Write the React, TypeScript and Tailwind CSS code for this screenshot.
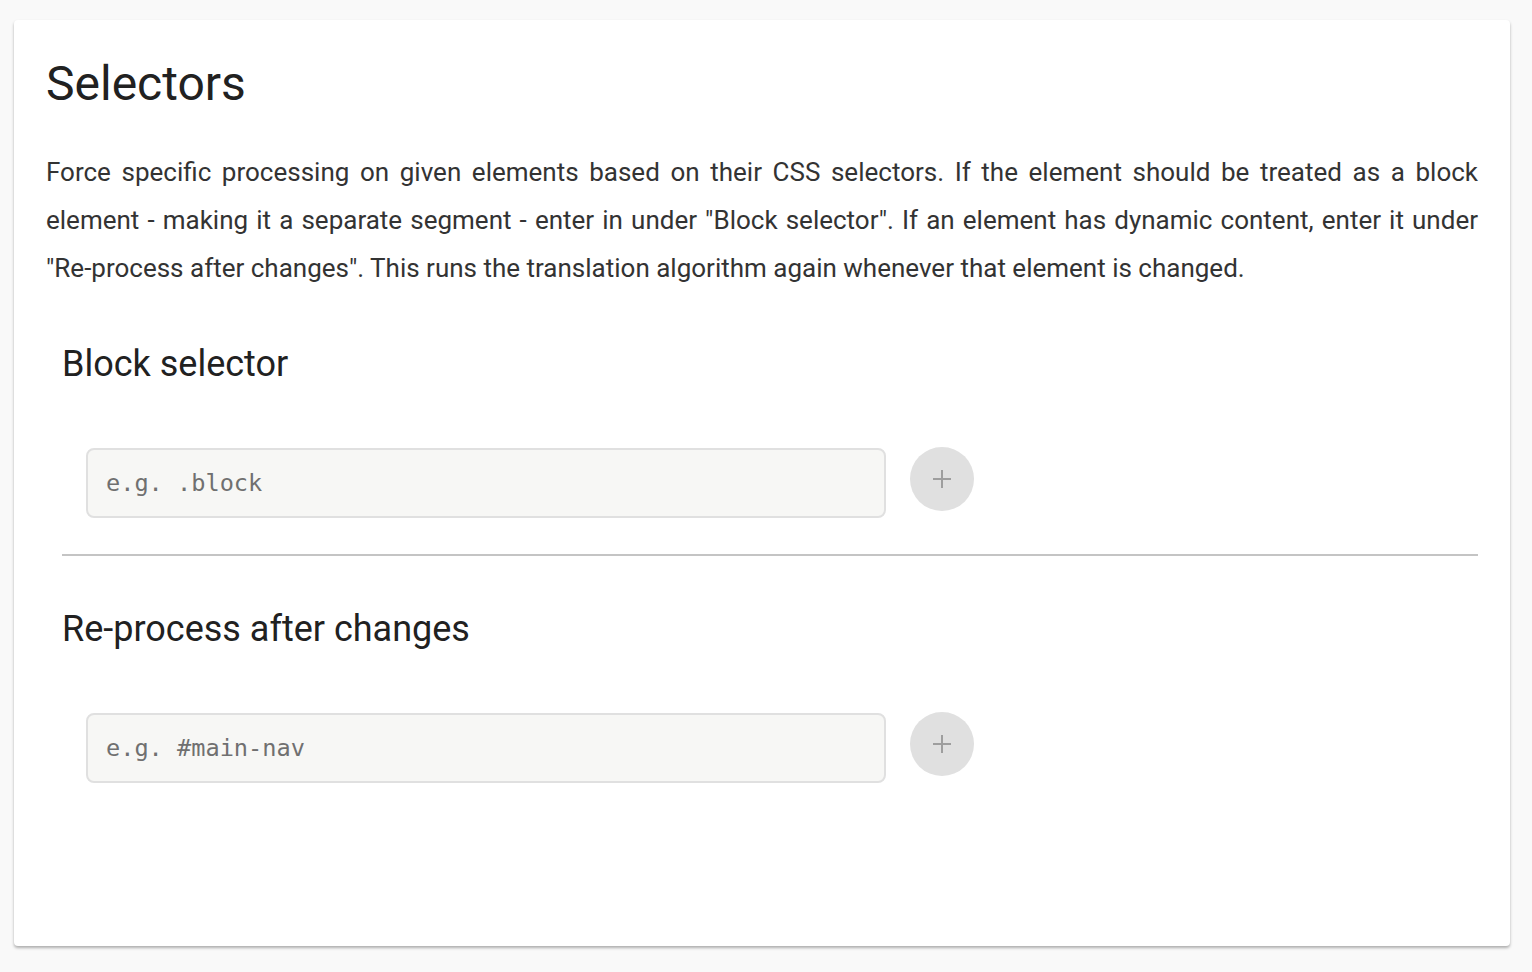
import React from "react";

function Plus() {
  return (
    <svg width="22" height="22" viewBox="0 0 22 22" fill="none">
      <path d="M11 2v18M2 11h18" stroke="#9e9e9e" strokeWidth="2" />
    </svg>
  );
}

function Row({ placeholder }: { placeholder: string }) {
  return (
    <div className="flex items-start gap-6 pl-6">
      <input
        placeholder={placeholder}
        className="w-[800px] h-[70px] rounded-lg border-2 border-[#e0e0e0] bg-[#f7f7f5] px-[18px] text-[23.6px] text-[#444] placeholder:text-[#707070] outline-none"
        style={{ fontFamily: '"DejaVu Sans Mono", monospace' }}
      />
      <button className="w-16 h-16 -mt-px rounded-full bg-[#e0e0e0] flex items-center justify-center">
        <Plus />
      </button>
    </div>
  );
}

export default function App() {
  return (
    <div
      className="min-h-[972px] bg-[#f9f9f9] pt-5 pl-[14px] pr-[22px] pb-[26px] text-[#222]"
      style={{ fontFamily: 'Roboto, "Noto Sans", sans-serif' }}
    >
      <div className="bg-white rounded-[4px] shadow-[0_2px_3px_rgba(0,0,0,0.3)] h-[926px] px-8 pt-[36px]">
        <h1 className="text-[48px] leading-[56px] text-[#212121]">Selectors</h1>
        <p className="mt-[36px] text-[26px] leading-[48px] text-justify text-[#333]">
          Force specific processing on given elements based on their CSS selectors. If the element should be treated as a block element - making it a separate segment - enter in under "Block selector". If an element has dynamic content, enter it under "Re-process after changes". This runs the translation algorithm again whenever that element is changed.
        </p>
        <div className="pl-4 mt-[50px]">
          <h2 className="text-[36px] leading-[44px] text-[#212121]">Block selector</h2>
          <div className="mt-[62px]">
            <Row placeholder="e.g. .block" />
          </div>
          <div className="mt-[36px] h-[2px] bg-[#c4c4c4]" />
          <h2 className="mt-[51px] text-[36px] leading-[44px] text-[#212121]">Re-process after changes</h2>
          <div className="mt-[62px]">
            <Row placeholder="e.g. #main-nav" />
          </div>
        </div>
      </div>
    </div>
  );
}
